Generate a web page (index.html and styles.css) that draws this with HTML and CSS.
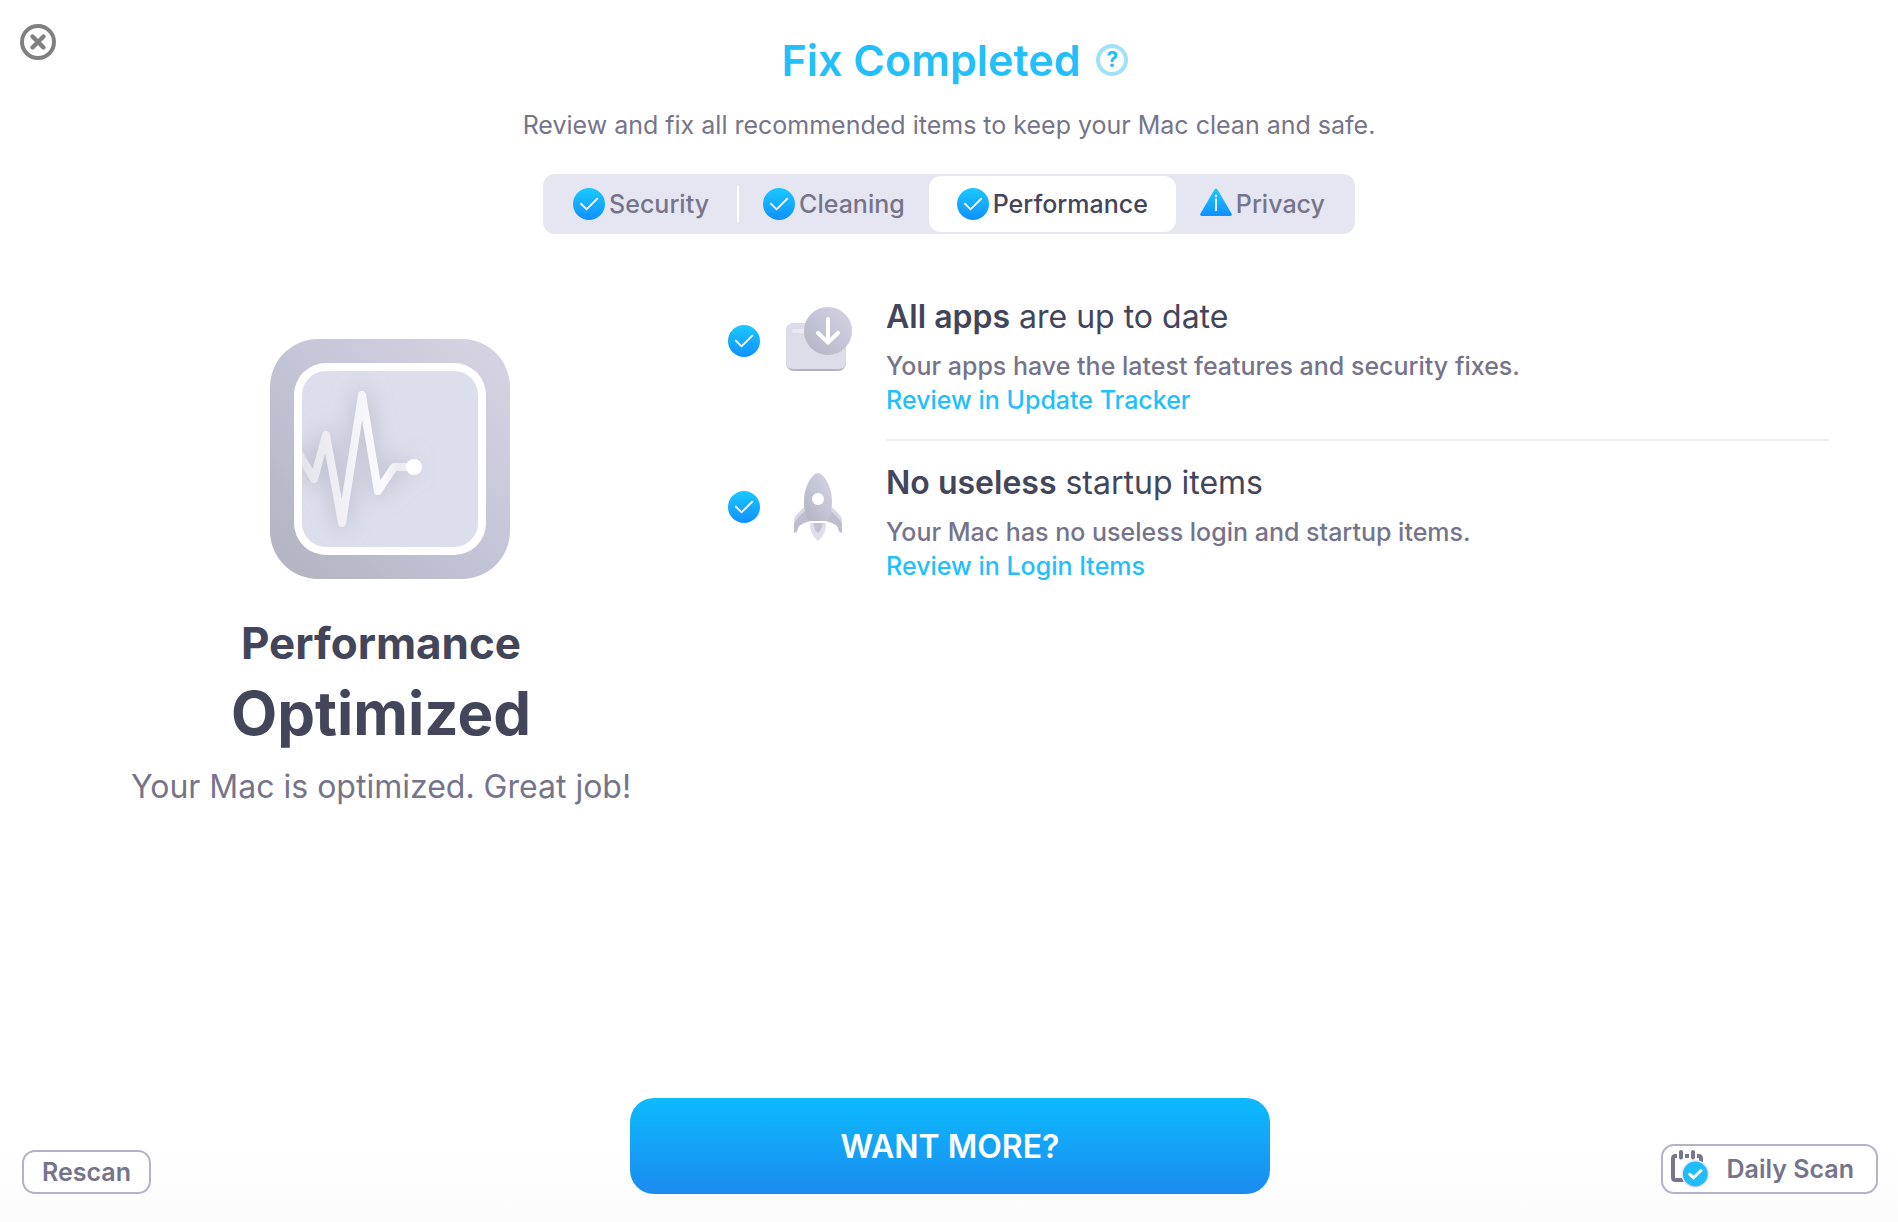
FILE: index.html
```
<!DOCTYPE html>
<html lang="en">
<head>
<meta charset="utf-8">
<meta name="viewport" content="width=device-width, initial-scale=1">
<title>Fix Completed</title>
<link rel="stylesheet" href="styles.css">
</head>
<body>
<svg class="defs" width="0" height="0" aria-hidden="true">
  <defs>
    <linearGradient id="blue" x1="0" y1="0" x2="0" y2="1">
      <stop offset="0" stop-color="#1ac9ff"/>
      <stop offset="1" stop-color="#1090ff"/>
    </linearGradient>
    <linearGradient id="metal" x1="0" y1="1" x2="1" y2="0">
      <stop offset="0.1" stop-color="#b5b6c3"/>
      <stop offset="0.5" stop-color="#c4c4d8"/>
      <stop offset="0.9" stop-color="#d4d1e0"/>
    </linearGradient>
    <symbol id="check" viewBox="0 0 32 32">
      <circle cx="16" cy="16" r="16" fill="url(#blue)"/>
      <path d="M7.8 15.6 13.6 21.3 24.3 10.6" fill="none" stroke="#fff" stroke-width="1.8" stroke-linecap="round"/>
    </symbol>
  </defs>
</svg>

<div class="window">
  <header class="header">
    <button class="close" type="button" aria-label="Close">
      <svg width="36" height="36" viewBox="0 0 36 36" fill="none" stroke="#808080">
        <circle cx="18" cy="18" r="16" stroke-width="4"/>
        <path d="M12.5 12.5 23.5 23.5M23.5 12.5 12.5 23.5" stroke-width="4.4" stroke-linecap="round"/>
      </svg>
    </button>
    <div class="intro">
      <div class="title-row">
        <h1 class="title">Fix Completed</h1>
        <button class="help" type="button" aria-label="Help">?</button>
      </div>
      <p class="subtitle">Review and fix all recommended items to keep your Mac clean and safe.</p>
      <div class="tabs" role="tablist">
        <button class="tab" type="button" role="tab"><svg class="status"><use href="#check"/></svg>Security</button>
        <span class="divider"></span>
        <button class="tab tab-narrow" type="button" role="tab"><svg class="status"><use href="#check"/></svg>Cleaning</button>
        <button class="tab tab-active" type="button" role="tab" aria-selected="true"><svg class="status"><use href="#check"/></svg>Performance</button>
        <button class="tab tab-narrow" type="button" role="tab">
          <svg class="status" viewBox="0 0 32 32">
            <path d="M14.4 1.8Q16 -.6 17.6 1.8L31.5 25.5Q32.6 28 30 28H2Q-.6 28 .5 25.5Z" fill="url(#blue)"/>
            <path d="M16 10.5V23" stroke="#fff" stroke-width="1.8"/>
            <circle cx="16" cy="8" r="1.2" fill="#fff"/>
          </svg>Privacy</button>
      </div>
    </div>
  </header>

  <main class="main">
    <section class="summary">
      <svg class="hero" viewBox="0 0 240 240" aria-hidden="true">
        <defs>
          <linearGradient id="pulse" gradientUnits="userSpaceOnUse" x1="30" y1="0" x2="144" y2="0">
            <stop offset="0" stop-color="#e3e3eb"/>
            <stop offset="0.6" stop-color="#f8f8fb"/>
            <stop offset="0.75" stop-color="#fafafc"/>
            <stop offset="0.86" stop-color="#e9e9ef"/>
            <stop offset="1" stop-color="#f4f4f8"/>
          </linearGradient>
          <filter id="glow" filterUnits="userSpaceOnUse" x="0" y="0" width="240" height="240">
            <feGaussianBlur stdDeviation="11"/>
          </filter>
          <clipPath id="screen"><rect x="32" y="32" width="176" height="176" rx="24"/></clipPath>
        </defs>
        <rect width="240" height="240" rx="48" fill="url(#metal)"/>
        <rect x="24" y="24" width="192" height="192" rx="32" fill="#fff"/>
        <g clip-path="url(#screen)">
          <rect x="32" y="32" width="176" height="176" fill="#dddeeb"/>
          <path d="M24 107 44 140 56 96 72 184 92 56 108 152 124 128H144" fill="none" stroke="#a5a3b6" stroke-opacity=".5" stroke-width="13" stroke-linejoin="round" filter="url(#glow)"/>
          <path d="M24 106 44 140 56 96 72 184 92 56 108 152 124 128H144" fill="none" stroke="url(#pulse)" stroke-width="8" stroke-linejoin="round"/>
          <circle cx="144" cy="128" r="8" fill="#fff"/>
        </g>
      </svg>
      <h2 class="summary-name">Performance</h2>
      <p class="summary-state">Optimized</p>
      <p class="summary-note">Your Mac is optimized. Great job!</p>
    </section>

    <ul class="items">
      <li class="item">
        <svg class="status item-status"><use href="#check"/></svg>
        <svg class="item-icon" viewBox="0 0 72 72" aria-hidden="true">
          <rect x="4" y="16" width="60" height="48" rx="8" fill="#b3b0c6"/>
          <path d="M12 16H56Q64 16 64 24V55Q64 62 57 62H11Q4 62 4 55V24Q4 16 12 16Z" fill="#dddce9"/>
          <rect x="10" y="22" width="20" height="4" rx="2" fill="#e9e9f3"/>
          <circle cx="46" cy="24" r="24" fill="url(#metal)"/>
          <path d="M46 12V35M36 26 46 35.500 56 26" fill="none" stroke="#fff" stroke-width="4" stroke-linecap="round" stroke-linejoin="round"/>
        </svg>
        <div class="item-body">
          <h3 class="item-title"><strong>All apps</strong> are up to date</h3>
          <p class="item-text">Your apps have the latest features and security fixes.</p>
          <a class="item-link" href="#update-tracker">Review in Update Tracker</a>
        </div>
      </li>
      <li class="item">
        <svg class="status item-status"><use href="#check"/></svg>
        <svg class="item-icon" viewBox="0 0 72 72" aria-hidden="true">
          <path d="M22.500 34Q13 42 12 46V60Q15 59.500 15.500 57Q16 53.500 17.500 52.500Q22 49 28 48ZM49.500 34Q59 42 60 46V60Q57 59.500 56.500 57Q56 53.500 54.500 52.500Q50 49 44 48Z" fill="#d9d8e6"/>
          <path d="M23 38Q14 46 12 51V60Q15 59.500 15.500 57Q16 53.500 17.500 52.500Q22 49 28 48ZM49 38Q58 46 60 51V60Q57 59.500 56.500 57Q56 53.500 54.500 52.500Q50 49 44 48Z" fill="#bfbed0"/>
          <path d="M36 0Q38 0 39.500 1.500C46 7 50 18 50 28Q50 40 45.500 48H26.500Q22 40 22 28C22 18 26 7 32.500 1.500Q34 0 36 0Z" fill="url(#metal)"/>
          <circle cx="36" cy="26" r="6" fill="#fff"/>
          <path d="M28 50H44Q44.500 61 36 68Q27.500 61 28 50Z" fill="#dfdeea"/>
          <path d="M31.500 50H40.500Q40.500 56 36 60Q31.500 56 31.500 50Z" fill="#c3c2d3"/>
        </svg>
        <div class="item-body">
          <h3 class="item-title"><strong>No useless</strong> startup items</h3>
          <p class="item-text">Your Mac has no useless login and startup items.</p>
          <a class="item-link" href="#login-items">Review in Login Items</a>
        </div>
      </li>
    </ul>
  </main>

  <footer class="footer">
    <button class="outline rescan" type="button">Rescan</button>
    <button class="primary" type="button">WANT MORE?</button>
    <button class="outline daily" type="button">
      <svg width="38" height="38" viewBox="0 0 38 38" fill="none" stroke="#78768c" aria-hidden="true">
        <path d="M6 6H4.500Q2 6 2 8.500V27.500Q2 30 4.500 30H14M26 6H27.500Q30 6 30 8.500V12" stroke-width="4"/>
        <path d="M14 6H18" stroke-width="4"/>
        <path d="M10 2V7.500M22 2V7.500" stroke-width="4" stroke-linecap="round"/>
        <circle cx="24.300" cy="24" r="13.200" fill="#21bdfb" stroke="#e6e6f5" stroke-width="1.600"/>
        <path d="M18.800 24.300 22.500 27.800 30 20.500" stroke="#fff" stroke-width="3" stroke-linecap="round" stroke-linejoin="round"/>
      </svg>
      Daily Scan
    </button>
  </footer>
</div>
</body>
</html>
```
FILE: styles.css
```
* {
  box-sizing: border-box;
}

body {
  margin: 0;
  font-family: "Inter", "Liberation Sans", sans-serif;
  font-size: 25px;
  color: #76748a;
  background: #fff;
}

h1, h2, h3, p, ul {
  margin: 0;
  padding: 0;
}

button {
  margin: 0;
  padding: 0;
  border: 0;
  background: none;
  font: inherit;
  color: inherit;
  cursor: pointer;
}

svg {
  display: block;
  flex: none;
}

.defs {
  position: absolute;
}

.window {
  display: flex;
  flex-direction: column;
  min-height: 100vh;
  background: linear-gradient(to top, #fcfcfc, #fff 80px);
}

.header {
  display: grid;
  grid-template-columns: 36px 1fr 36px;
  align-items: start;
  padding: 24px 20px 0;
}

.intro {
  display: flex;
  flex-direction: column;
  align-items: center;
  padding-top: 10px;
}

.title-row {
  display: flex;
  align-items: center;
  gap: 16px;
  padding-left: 12px;
}

.title {
  font-size: 43px;
  font-weight: 600;
  line-height: 52px;
  color: #22bffb;
}

.help {
  width: 32px;
  height: 32px;
  border: 4px solid #9fe2fd;
  border-radius: 50%;
  font-size: 21px;
  font-weight: 700;
  line-height: 24px;
  color: #22bffb;
}

.subtitle {
  margin-top: 23px;
  line-height: 32px;
}

.tabs {
  display: flex;
  align-items: center;
  height: 60px;
  margin-top: 33px;
  padding: 2px 6px 2px 2px;
  border-radius: 12px;
  background: #e6e6f3;
}

.tab {
  display: flex;
  align-items: center;
  gap: 4px;
  height: 56px;
  padding: 0 28px;
  border-radius: 12px;
  font-weight: 500;
}

.tab-narrow {
  padding: 0 24px;
}

.tab-active {
  background: #fff;
  color: #43455a;
}

.divider {
  width: 2px;
  height: 36px;
  background: #fff;
}

.status {
  width: 32px;
  height: 32px;
}

.main {
  display: grid;
  grid-template-columns: 29fr 46fr;
  padding: 41px 69px 40px 34px;
}

.summary {
  display: flex;
  flex-direction: column;
  align-items: center;
  padding-top: 64px;
  text-align: center;
}

.hero {
  width: 240px;
  height: 240px;
  margin-left: 18px;
}

.summary-name {
  margin-top: 36px;
  font-size: 44px;
  font-weight: 700;
  line-height: 56px;
  color: #43455a;
}

.summary-state {
  margin-top: 4px;
  font-size: 60px;
  font-weight: 700;
  line-height: 76px;
  color: #43455a;
}

.summary-note {
  margin-top: 16px;
  font-size: 32px;
  font-weight: 400;
  line-height: 40px;
}

.items {
  list-style: none;
}

.item {
  display: grid;
  grid-template-columns: 32px 72px 1fr;
  align-items: start;
}

.item-status {
  margin-top: 50px;
}

.item-icon {
  width: 72px;
  height: 72px;
  margin: 32px 0 0 22px;
}

.item-body {
  margin-left: 54px;
  padding: 22px 0;
  border-bottom: 2px solid #ededee;
}

.item:last-child .item-body {
  border-bottom: 0;
}

.item-title {
  margin-bottom: 12px;
  font-size: 32px;
  font-weight: 400;
  line-height: 40px;
  color: #43455a;
}

.item-title strong {
  font-weight: 600;
}

.item-text,
.item-link {
  font-weight: 500;
  line-height: 34px;
}

.item-link {
  display: inline-block;
  vertical-align: top;
  color: #22bffb;
  text-decoration: none;
}

.footer {
  display: grid;
  grid-template-columns: 1fr 640px 1fr;
  align-items: end;
  margin-top: auto;
  padding: 0 20px 28px 22px;
}

.primary {
  height: 96px;
  border-radius: 24px;
  background: linear-gradient(#0cbbfd, #1b8bf0);
  font-size: 32px;
  font-weight: 600;
  color: #fff;
}

.outline {
  border: 2px solid #b3b2c8;
  border-radius: 13px;
  background: #fff;
  font-weight: 600;
}

.rescan {
  justify-self: start;
  height: 44px;
  padding: 0 18px;
}

.daily {
  display: flex;
  align-items: center;
  justify-self: end;
  gap: 18px;
  height: 50px;
  padding: 0 22px 0 8px;
}
```
